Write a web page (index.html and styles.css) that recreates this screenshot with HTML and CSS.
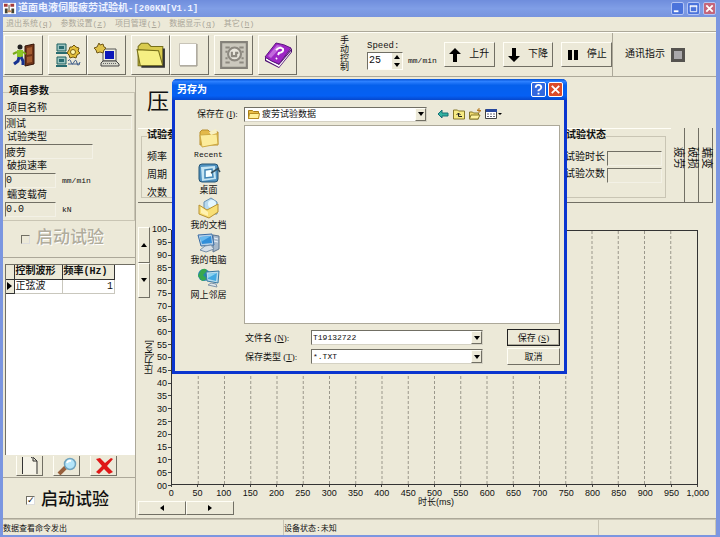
FILE: index.html
```html
<!DOCTYPE html>
<html lang="zh-CN">
<head>
<meta charset="utf-8">
<title>道面电液伺服疲劳试验机</title>
<link rel="stylesheet" href="styles.css">
</head>
<body>
<div class="app">
  <header class="titlebar">
    <svg class="app-icon" viewBox="0 0 14 14" aria-hidden="true"><path fill="#fff" d="M0 1h14v12H0z"/><path fill="#a43c3c" d="M1 2h4v3H1zM8 2h4v3H8z"/><path fill="#443" d="M2 7h3v5H2zM9 7h3v5H9zM6 3h1v8H6z"/><path fill="#c85" d="M5 9h4v2H5z"/></svg>
    <h1 class="app-title">道面电液伺服疲劳试验机<span class="version">-[200KN[V1.1]</span></h1>
    <div class="win-buttons">
      <button class="win-btn" aria-label="最小化"><svg viewBox="0 0 12 12"><path fill="#fff" d="M2 8h5v2H2z"/></svg></button>
      <button class="win-btn" aria-label="最大化"><svg viewBox="0 0 12 12"><path fill="none" stroke="#fff" d="M2.500 3v6.500h7V3M2 3h8M2 4h8"/></svg></button>
      <button class="win-btn close-muted" aria-label="关闭"><svg viewBox="0 0 12 12"><path stroke="#fff" stroke-width="2" d="m2.500 2.500 7 7m0-7-7 7"/></svg></button>
    </div>
  </header>
  <nav class="menubar">
    <a href="#exit">退出系统(<u>q</u>)</a><a href="#set">参数设置(<u>z</u>)</a><a href="#proj">项目管理(<u>t</u>)</a><a href="#data">数据显示(<u>g</u>)</a><a href="#other">其它(<u>h</u>)</a>
  </nav>
  <div class="toolbar">
    <div class="tool-group">
      <button class="tool" aria-label="退出"><svg viewBox="0 0 26 26"><path fill="#713519" stroke="#351408" d="m14 4 9-2v20l-9 2z"/><path fill="#a35b30" d="m16 6 5-1v7l-5 1zm0 9 5-1v6l-5 1z"/><circle cx="9" cy="5" r="2.500" fill="#222"/><path fill="#8bc626" d="M6 8h6v7H6z"/><path fill="none" stroke="#78a918" stroke-width="2" d="m6 10-4 2m10-2 3 2"/><path fill="none" stroke="#173290" stroke-width="3" d="m8 15-1 4-4 3m7-7 2 4v4"/></svg></button>
    </div>
    <div class="tool-group">
      <button class="tool" aria-label="参数"><svg viewBox="0 0 26 26"><g fill="#9cc4c0" stroke="#1c6060"><path d="M2 2h9v7H2zM2 15h9v7H2z"/></g><path fill="#286c70" d="M4 4h5v3H4zM4 17h5v3H4zM1 10h11v2H1zM1 23h11v2H1z"/><path fill="#e3bf3a" stroke="#6f5510" d="m17 5 2-2 2 2 3 1-1 3 2 2-3 2-1 3-3-1-3 1-1-3-2-2 2-3 1-3z"/><circle cx="18" cy="10" r="2.500" fill="#fff8b0" stroke="#806010"/><path fill="none" stroke="#3c5a88" d="M13 19q2-3 3 1t3 0 3 1 3-1M13 22h12"/></svg></button>
      <button class="tool" aria-label="通讯"><svg viewBox="0 0 26 26"><path fill="#eeeede" stroke="#555" d="M9 7h13v12H9z"/><path fill="#0b17b9" d="M11 9h9v8h-9z"/><path fill="#d8d8cc" stroke="#444" d="m7 21 2-2h13l3 3v2H7z"/><path stroke="#666" stroke-dasharray="1 1" d="M9 21.500h13"/><path fill="#dfc24b" stroke="#705818" d="m5 1 1 2 3-1 1 3 2 1-2 2-1 3-3-1-3 1-1-3-2-2 3-1z"/></svg></button>
    </div>
    <div class="tool-group">
      <button class="tool" aria-label="打开"><svg class="wide-icon" viewBox="0 0 28 26"><path fill="#d9cb4e" stroke="#777019" d="M2 23V5l3-3h6l3 3h11v18z"/><path fill="#f6ef83" stroke="#77701a" d="m1 8 20 1 4 14H4z"/><path fill="none" stroke="#333" stroke-width="2" d="M5 24h21V7"/></svg></button>
      <button class="tool" aria-label="新建"><svg viewBox="0 0 26 26"><path fill="#fff" stroke="#c8c4b8" d="M2.500 1.500h17v22h-17z"/><path fill="none" stroke="#99958b" d="M3 24h17V2"/></svg></button>
    </div>
    <div class="tool-group">
      <button class="tool" aria-label="工具" disabled><svg class="wide-icon" viewBox="0 0 28 26"><path fill="#cbc8bd" stroke="#85827a" stroke-width="2" d="M2 1h24v24H2z"/><path fill="none" stroke="#8d8980" stroke-width="2" d="M6 6h4m9 0h4M6 20h4m9 0h4M6 10h2m13 0h2M6 16h2m13 0h2"/><circle cx="14.500" cy="12" r="6" fill="#e9e6dc" stroke="#8d8980" stroke-width="2"/><path fill="none" stroke="#8d8980" stroke-width="2" d="M12 10v4h4v-3h2"/></svg></button>
    </div>
    <div class="tool-group">
      <button class="tool" aria-label="帮助"><svg class="wide-icon" viewBox="0 0 28 28"><path fill="#4c0d72" d="m1 16 14 7 13-16v4L15 27 1 20z"/><path fill="#fff" d="m2 17 13 7L27 10v1L15 26 2 19z"/><path fill="#9d27c4" stroke="#5d1481" d="m1 16 11-14q8 1 15 5L15 23q-7-2-14-7z"/><path fill="#c26add" d="m4 15 9-11 5 1L7 17z"/><path fill="none" stroke="#fff" stroke-width="2" d="M12 9q4-4 7-1 1 3-4 4l-1 2m-1 3-1 1"/></svg></button>
    </div>
    <section class="manual">
      <span class="manual-title">手动控制</span>
      <div class="speed">
        <label for="speed">Speed:</label>
        <div class="speed-row">
          <span class="spin"><input id="speed" type="text" value="25"><span class="spin-btns"><button aria-label="加"><svg viewBox="0 0 6 4"><path d="m3 0 3 4H0z"/></svg></button><button aria-label="减"><svg viewBox="0 0 6 4"><path d="m0 0h6L3 4z"/></svg></button></span></span>
          <span class="unit">mm/min</span>
        </div>
      </div>
      <div class="motion">
        <button class="move"><svg viewBox="0 0 12 14"><path d="m6 0 6 6H8v8H4V6H0z"/></svg>上升</button>
        <button class="move"><svg viewBox="0 0 12 14"><path d="m6 14 6-6H8V0H4v8H0z"/></svg>下降</button>
        <button class="move"><svg viewBox="0 0 12 14"><path d="M1 2h4v10H1zM7 2h4v10H7z"/></svg>停止</button>
      </div>
    </section>
    <div class="comm">通讯指示<span class="lamp"></span></div>
  </div>

  <main class="main">
    <aside class="side">
      <fieldset class="group project">
        <legend>项目参数</legend>
        <label for="p1">项目名称</label>
        <div class="field"><input id="p1" class="sunken" value="测试"></div>
        <label for="p2">试验类型</label>
        <div class="field"><input id="p2" class="sunken medium" value="疲劳"></div>
        <label for="p3">破损速率</label>
        <div class="field"><input id="p3" class="sunken short" value="0"><span class="unit">mm/min</span></div>
        <label for="p4">蠕变载荷</label>
        <div class="field"><input id="p4" class="sunken short" value="0.0"><span class="unit">kN</span></div>
      </fieldset>
      <label class="start muted"><input type="checkbox" disabled>启动试验</label>
      <div class="waves">
        <div class="wave-list">
          <table class="wave-table">
            <thead><tr><th class="mark"></th><th class="wave">控制波形</th><th class="freq">频率(Hz)</th></tr></thead>
            <tbody><tr><td class="mark"><svg viewBox="0 0 5 8"><path d="m0 0 5 4-5 4z"/></svg></td><td>正弦波</td><td class="num">1</td></tr></tbody>
          </table>
        </div>
        <div class="wave-tools">
          <button class="small-tool" aria-label="新建"><svg viewBox="0 0 24 18"><path fill="#f5f3e8" d="M5 0h9v5h4v12H5z"/><path fill="none" stroke="#333" d="M4.500 0v17M15 1v3h4v13M13 1q1-2 3 0l3 3"/></svg></button>
          <button class="small-tool" aria-label="查看"><svg viewBox="0 0 24 18"><path stroke="#98603c" stroke-width="4" d="m11 10-7 7"/><circle cx="15" cy="7" r="5.500" fill="#b4e5fa" stroke="#71a4bf" stroke-width="1.500"/><path fill="none" stroke="#fff" stroke-width="2" d="M12 6q1-3 4-2"/></svg></button>
          <button class="small-tool" aria-label="删除"><svg viewBox="0 0 24 18"><path fill="#df1717" d="m4 2 4-1 5 5 6-5 2 1-6 7 6 6-4 2-5-5-5 5-3-2 6-6z"/></svg></button>
        </div>
      </div>
      <label class="start live"><input type="checkbox" checked>启动试验</label>
    </aside>

    <section class="work">
      <h2 class="reading">压</h2>
      <div class="tabs">
        <div class="page">
          <fieldset class="group params"><legend>试验参数</legend><p>频率</p><p>周期</p><p>次数</p></fieldset>
          <fieldset class="group state"><legend>试验状态</legend>
            <div class="state-row"><label for="s1">试验时长</label><input id="s1" class="sunken"></div>
            <div class="state-row"><label for="s2">试验次数</label><input id="s2" class="sunken"></div>
          </fieldset>
        </div>
        <button class="tab active">疲劳</button><button class="tab">破损</button><button class="tab">蠕变</button>
      </div>
      <div class="chart">
        <div class="vscroll"><button aria-label="向上"><svg viewBox="0 0 6 4"><path d="m3 0 3 4H0z"/></svg></button><button aria-label="向下"><svg viewBox="0 0 6 4"><path d="M0 0h6L3 4z"/></svg></button></div>
        <span class="y-title">压力[kN]</span>
        <div class="y-labels"><span>100</span><span>95</span><span>90</span><span>85</span><span>80</span><span>75</span><span>70</span><span>65</span><span>60</span><span>55</span><span>50</span><span>45</span><span>40</span><span>35</span><span>30</span><span>25</span><span>20</span><span>15</span><span>10</span><span>05</span><span>00</span></div>
        <svg class="plot">
          <g class="grid">
            <line x1="5%" x2="5%" y2="100%"/><line x1="10%" x2="10%" y2="100%"/><line x1="15%" x2="15%" y2="100%"/><line x1="20%" x2="20%" y2="100%"/><line x1="25%" x2="25%" y2="100%"/><line x1="30%" x2="30%" y2="100%"/><line x1="35%" x2="35%" y2="100%"/><line x1="40%" x2="40%" y2="100%"/><line x1="45%" x2="45%" y2="100%"/><line x1="50%" x2="50%" y2="100%"/><line x1="55%" x2="55%" y2="100%"/><line x1="60%" x2="60%" y2="100%"/><line x1="65%" x2="65%" y2="100%"/><line x1="70%" x2="70%" y2="100%"/><line x1="75%" x2="75%" y2="100%"/><line x1="80%" x2="80%" y2="100%"/><line x1="85%" x2="85%" y2="100%"/><line x1="90%" x2="90%" y2="100%"/><line x1="95%" x2="95%" y2="100%"/>
          </g>
        </svg>
        <div class="x-labels"><span>0</span><span>50</span><span>100</span><span>150</span><span>200</span><span>250</span><span>300</span><span>350</span><span>400</span><span>450</span><span>500</span><span>550</span><span>600</span><span>650</span><span>700</span><span>750</span><span>800</span><span>850</span><span>900</span><span>950</span><span>1,000</span></div>
      </div>
      <div class="chart-foot">
        <div class="hscroll"><button aria-label="向左"><svg viewBox="0 0 4 6"><path d="M4 0v6L0 3z"/></svg></button><button aria-label="向右"><svg viewBox="0 0 4 6"><path d="m0 0 4 3-4 3z"/></svg></button></div>
        <span class="x-title">时长(ms)</span>
      </div>
    </section>
  </main>
  <footer class="status"><span>数据查看命令发出</span><span>设备状态:未知</span><span></span></footer>
</div>

<form class="dialog" role="dialog" aria-labelledby="dlg-title">
  <header class="dlg-head">
    <h2 id="dlg-title">另存为</h2>
    <button type="button" class="dlg-btn help" aria-label="帮助"><svg viewBox="0 0 14 14"><path fill="none" stroke="#fff" stroke-width="2" d="M4 5q0-3 3-3t3 3q0 1-3 3v1m0 1.500v2"/></svg></button>
    <button type="button" class="dlg-btn close" aria-label="关闭"><svg viewBox="0 0 14 14"><path stroke="#fff" stroke-width="2" d="m3 3 8 8m0-8-8 8"/></svg></button>
  </header>
  <div class="dlg-body">
    <div class="look-row">
      <label for="look">保存在 (<u>I</u>):</label>
      <div class="combo look">
        <svg class="mini" viewBox="0 0 12 12"><path fill="#e8bd45" stroke="#a77d17" d="M.500 10.500v-8h4l1 1h5v7z"/><path fill="#fff09a" stroke="#b58b20" d="M1.500 5.500h10l-1 5h-10z"/></svg>
        <select id="look"><option>疲劳试验数据</option></select>
        <span class="arrow"><svg viewBox="0 0 6 4"><path d="M0 0h6L3 4z"/></svg></span>
      </div>
      <div class="nav-tools">
        <button type="button" aria-label="后退"><svg viewBox="0 0 12 12"><path fill="#32b3a0" stroke="#176e77" d="m1 6 4-4v3h6v3H5v2z"/></svg></button>
        <button type="button" aria-label="向上"><svg viewBox="0 0 12 12"><path fill="#f7eb83" stroke="#86782a" d="M.500 11V2h4l1 1h6v8z"/><path fill="none" stroke="#222" d="M9 8.500H5.500V5m-2 2 2-2 2 2"/></svg></button>
        <button type="button" aria-label="新建文件夹"><svg viewBox="0 0 12 12"><path fill="#f1db71" stroke="#86782a" d="M.500 11V4h3l1 1h5v6z"/><path fill="#fff39d" stroke="#86782a" d="M2 7h9l-2 4H.500z"/><path stroke="#b97a20" d="M10 0v5M8 2.500h4M8.500 1l3 3"/></svg></button>
        <button type="button" class="view" aria-label="查看"><svg viewBox="0 0 17 12"><path fill="#fff" stroke="#444" d="M.500 1.500h11v9H.500z"/><path fill="#27479c" d="M1 1h11v3H1z"/><path stroke="#667" stroke-dasharray="2 1" d="M2 6h9M2 8.500h9"/><path d="M13 5h4l-2 2z"/></svg></button>
      </div>
    </div>
    <div class="browse">
      <nav class="places">
        <a href="#recent"><svg viewBox="0 0 24 22"><path fill="#e3b949" stroke="#b98f2f" d="M3 18V5l2-2h6l2 2h8v13z"/><path fill="#fcec9b" stroke="#ceaa42" d="m3 8 17-1 1 10-16 3z"/><path fill="#f9f1c3" d="m12 5 7-3 1 4-6 2z"/></svg><span class="latin">Recent</span></a>
        <a href="#desktop"><svg viewBox="0 0 24 22"><rect x="2" y="2" width="19" height="18" rx="3" fill="#4f92c0" stroke="#245475"/><path fill="#c5e5f3" d="m4 5 14-1 1 13-14 2z"/><path fill="#f7ffff" stroke="#4085b5" stroke-width="1.500" d="m8 8 7-1 1 8-8 1z"/><path stroke="#35505e" stroke-width="1.500" d="m14 11 8-5m-1 1 2 3"/></svg><span>桌面</span></a>
        <a href="#documents"><svg viewBox="0 0 24 22"><path fill="#b7d9ef" stroke="#6791b3" d="m7 5 7-4 6 4v12H7z"/><circle cx="15" cy="7" r="4" fill="#e4f7ff"/><path fill="#f8df75" stroke="#b79132" d="m2 8 8 5 11-6v8l-9 6-10-4z"/><path fill="#fff2b1" d="m4 10 7 5v4l-7-3z"/></svg><span>我的文档</span></a>
        <a href="#computer"><svg viewBox="0 0 24 22"><path fill="#a8b9cb" stroke="#5e7690" d="m16 3 6 1v13l-6 3z"/><path stroke="#e8f2fa" d="m17 6 4 1m-4 2 4 1"/><path fill="#b6d0e8" stroke="#396ca5" d="m1 3 14-1 2 11-13 1z"/><path fill="#318ed9" d="m3 5 11-1 1 7-10 1z"/><path fill="#68b9ed" d="m3 5 11-1-10 6z"/><path fill="#d7dfe7" stroke="#7890a8" d="m8 14 6-1 3 4-8 3-6-2z"/></svg><span>我的电脑</span></a>
        <a href="#network"><svg viewBox="0 0 24 22"><circle cx="7" cy="8" r="6" fill="#2386ae"/><path fill="#38a84f" d="M4 3q5-3 6 1L6 8l4 4-5 2-4-5z"/><path fill="#b8dced" stroke="#3877a1" d="m9 5 13-1-1 12-11-2z"/><path fill="#43a9e1" d="m11 7 9-1-1 8-8-2z"/><path fill="#8cd3f0" d="m11 7 9-1-9 5z"/><path fill="#dce5ec" stroke="#8195a8" d="m14 16 5 1 1 3-9-2z"/></svg><span>网上邻居</span></a>
      </nav>
      <div class="file-area">
        <div class="file-list"></div>
        <div class="save-row">
          <label for="fname">文件名 (<u>N</u>):</label>
          <div class="combo"><input id="fname" class="latin" value="T19132722"><button type="button" class="arrow" aria-label="展开"><svg viewBox="0 0 6 4"><path d="M0 0h6L3 4z"/></svg></button></div>
          <button class="action default">保存 (<u>S</u>)</button>
        </div>
        <div class="save-row">
          <label for="ftype">保存类型 (<u>T</u>):</label>
          <div class="combo"><select id="ftype" class="latin"><option>*.TXT</option></select><span class="arrow"><svg viewBox="0 0 6 4"><path d="M0 0h6L3 4z"/></svg></span></div>
          <button type="button" class="action">取消</button>
        </div>
      </div>
    </div>
  </div>
</form>
</body>
</html>
```
FILE: styles.css
```css
:root {
  --face: #ece9d8;
  --shadow: #aca899;
  --dark: #716f64;
  --light: #fffef6;
}
* { box-sizing: border-box; }
body {
  margin: 0;
  position: relative;
  background: var(--face);
  color: #111;
  font: 10px/14px "Liberation Mono", "Noto Sans CJK SC", monospace;
}
button, input, select {
  margin: 0; padding: 0; border: 0; border-radius: 0;
  background: none; color: inherit; font: inherit;
  min-width: 0;
}
select { appearance: none; }
h1, h2, p { margin: 0; font-weight: normal; }
svg { display: block; flex: none; }
a { color: inherit; text-decoration: none; }

.app {
  min-height: 100vh;
  display: flex; flex-direction: column;
  border: solid #7b96e0;
  border-width: 0 4px 2px 3px;
}

/* title and menu */
.titlebar {
  height: 17px; flex: none;
  display: flex; align-items: center; gap: 2px;
  background: linear-gradient(#6f8ddc, #809ee6 50%, #7894de);
  color: #eef2ff;
}
.app-icon { width: 13px; height: 13px; }
.app-title { flex: 1; font-size: 10px; line-height: 16px; font-weight: bold; white-space: nowrap; }
.version { font-size: 9px; }
.win-buttons { display: flex; gap: 3px; }
.win-btn {
  width: 13px; height: 13px;
  border: 1px solid #b3c4f4; border-radius: 2px;
  background: #4b73db;
}
.win-btn svg { width: 11px; height: 11px; }
.close-muted { background: #c5657a; }
.menubar {
  height: 15px; flex: none;
  display: flex; gap: 8px; padding: 0 3px;
  font-size: 8px; line-height: 14px; color: #aaa698;
  border-bottom: 1px solid var(--shadow);
}

/* toolbar */
.toolbar {
  height: 45px; flex: none;
  display: flex; align-items: stretch; gap: 5px;
  padding-left: 1px;
  border-top: 1px solid var(--light);
  border-bottom: 1px solid var(--shadow);
}
.tool-group { display: flex; align-items: center; }
.tool {
  width: 39px; height: 40px;
  display: flex; align-items: center; justify-content: center;
}
.tool, .small-tool, .move, .vscroll button, .hscroll button, .action, .arrow {
  border: 1px solid; border-color: var(--light) var(--dark) var(--dark) var(--light);
}
.tool svg { width: 26px; height: 26px; }
.tool .wide-icon { width: 30px; height: 28px; }
.manual { flex: 1; display: flex; align-items: center; margin-left: 34px; border-right: 1px solid var(--shadow); }
.manual-title {
  width: 17px; padding: 0 4px; font-size: 9px; line-height: 9px;
  word-break: break-all; margin-right: 14px;
}
.speed { font-size: 9px; line-height: 12px; margin-right: 7px; }
.speed label { display: block; }
.speed-row { display: flex; align-items: center; gap: 5px; }
.spin {
  display: flex; width: 36px; height: 18px; background: #fff;
  border: 1px solid; border-color: var(--dark) var(--light) var(--light) var(--dark);
}
.spin input { flex: 1; font-size: 10px; padding-left: 1px; }
.spin-btns { display: grid; width: 10px; background: var(--face); }
.spin-btns button { display: grid; place-items: center; }
.spin-btns svg { width: 6px; height: 4px; }
.unit { font: 8px/12px "Liberation Mono", monospace; }
.motion { flex: 1; display: flex; gap: 8px; }
.move {
  flex: 1; height: 25px; white-space: nowrap;
  display: flex; align-items: center; justify-content: center; gap: 8px;
}
.move svg { width: 12px; height: 14px; }
.comm { width: 98px; display: flex; align-items: center; gap: 6px; padding-left: 7px; }
.lamp { width: 14px; height: 14px; border: 3px solid #55534f; background: #aaa8aa; }

/* left column */
.main { flex: 1; display: flex; min-height: 0; }
.side { width: 133px; flex: none; display: flex; flex-direction: column; border-right: 1px solid var(--shadow); }
.group { margin: 0; min-width: 0; padding: 0; border: 1px solid #c9c5b4; }
legend { font-weight: bold; line-height: 14px; padding: 0; margin-left: 4px; }
.project { margin-top: 8px; padding: 2px 2px 3px; border-left: 0; }
.project label { display: block; height: 14px; line-height: 16px; padding-left: 2px; }
.field { display: flex; align-items: center; gap: 6px; height: 15px; }
.sunken {
  width: 100%; height: 15px;
  border: 1px solid; border-color: var(--dark) #f3f1e6 #f3f1e6 var(--dark);
}
.medium { width: 88px; }
.short { width: 51px; }
.start { display: flex; align-items: center; font-size: 17px; line-height: 24px; gap: 6px; height: 36px; padding-left: 23px; font-weight: 500; }
.start input {
  appearance: none; width: 9px; height: 9px; background: #fff;
  border: 1px solid; border-color: var(--dark) #ddd #ddd var(--dark);
}
.start input:checked::after { content: "✓"; display: block; font: bold 9px/7px "DejaVu Sans", sans-serif; }
.live { height: 40px; padding-top: 5px; }
.muted { color: #b0ac9c; text-shadow: 1px 1px #fff; padding-left: 18px; }
.muted input { background: var(--face); }
.waves {
  flex: 1; display: flex; flex-direction: column;
  border-top: 1px solid var(--shadow); border-bottom: 1px solid var(--shadow);
  padding: 6px 0 0 2px;
}
.wave-list { flex: 1; background: #fff; border: solid var(--dark); border-width: 1px 0 0 1px; }
.wave-table { border-collapse: collapse; table-layout: fixed; width: 109px; line-height: 13px; }
.wave-table th, .wave-table td { padding: 0 1px; height: 14px; border: 1px solid #c9c7bd; text-align: left; white-space: nowrap; }
.wave-table th, .wave-table .mark { background: var(--face); border: solid #333; border-width: 0 1px 1px 0; }
.wave-table .mark { width: 8px; }
.wave-table .wave { width: 48px; }
.wave-table .num { text-align: right; }
.mark svg { width: 5px; height: 8px; }
.wave-tools { display: flex; gap: 10px; padding: 1px 11px; }
.small-tool { width: 27px; height: 20px; display: grid; place-items: center; border-top: 0; }
.small-tool svg { width: 24px; height: 18px; }

/* work area */
.work { flex: 1; min-width: 0; display: flex; flex-direction: column; padding: 0 3px 3px 2px; }
.reading { height: 51px; padding-left: 9px; font-size: 22px; line-height: 53px; }
.tabs { height: 75px; display: flex; }
.page {
  flex: 1; display: flex; justify-content: space-between;
  padding: 0 5px 4px 3px;
  border: solid; border-width: 1px 0 1px 0; border-color: var(--light) transparent var(--dark);
}
.params { flex: 1; padding: 6px 5px 0; }
.params legend { margin-left: 0; }
.params p { line-height: 18px; }
.state { width: 101px; border-left: 0; padding: 8px 3px 0 0; }
.state legend { margin-left: 1px; }
.state-row { display: flex; height: 17px; align-items: flex-start; white-space: nowrap; }
.state-row label { width: 42px; flex: none; }
.tab {
  width: 14px; writing-mode: vertical-rl; text-orientation: sideways;
  font-size: 11px; line-height: 12px; text-align: center;
  border: solid var(--dark); border-width: 0 1px 1px 0;
  padding-bottom: 14px;
}
.chart {
  flex: 1; min-height: 0; margin-top: 20px;
  display: grid;
  grid-template-columns: 12px 21px 1fr 15px;
  grid-template-rows: 7px 1fr 7px 5px;
  font: 9px/12px "Liberation Sans", "Noto Sans CJK SC", sans-serif;
}
.vscroll { grid-area: 1 / 1 / 4 / 2; margin-top: 4px; height: 71px; display: grid; }
.vscroll button, .hscroll button { display: grid; place-items: center; }
.vscroll svg { width: 6px; height: 4px; }
.y-title {
  grid-area: 1 / 1 / 4 / 3; place-self: center start; margin-left: 5px;
  writing-mode: vertical-rl; transform: rotate(180deg); line-height: 12px;
}
.y-labels {
  grid-area: 1 / 2 / 4 / 3; min-height: 0;
  display: grid; grid-auto-rows: 1fr; justify-items: end; align-items: center;
}
.y-labels span { display: flex; align-items: center; gap: 1px; min-height: 0; }
.y-labels span::after { content: ""; width: 3px; height: 1px; background: #444; }
.plot { grid-area: 2 / 3; width: 100%; height: 100%; border: 1px solid #333; }
.grid { stroke: #9a978b; stroke-dasharray: 3 2; }
.x-labels {
  grid-area: 3 / 3 / 5 / 4; margin: 0 -13px;
  display: grid; grid-auto-flow: column; grid-auto-columns: minmax(0, 1fr); justify-items: center;
}
.x-labels span::before { content: ""; display: block; width: 1px; height: 2px; margin: 0 auto; background: #444; }
.chart-foot { height: 18px; display: flex; align-items: flex-start; }
.hscroll { width: 96px; height: 14px; align-self: flex-end; display: grid; grid-template-columns: 1fr 1fr; }
.hscroll svg { width: 4px; height: 6px; }
.x-title { flex: 1; padding-left: 184px; font: 9px/10px "Liberation Sans", "Noto Sans CJK SC", sans-serif; }
.status {
  height: 17px; flex: none; display: grid; grid-template-columns: 281px 1fr 117px;
  font-size: 8px; line-height: 18px; border-top: 1px solid var(--shadow);
}
.status span { border: solid #c9c5b4; border-width: 1px 1px 0 0; overflow: hidden; }

/* save dialog floating above the main window */
.dialog {
  position: absolute; left: 172px; top: 79px; width: 395px;
  background: var(--face);
  border: solid #0a35cf; border-width: 0 3px 3px;
  border-radius: 5px 5px 0 0;
  font: 9px/12px "Liberation Serif", "Noto Sans CJK SC", serif;
}
.latin { font: 8px/12px "Liberation Mono", monospace; }
.dlg-head {
  height: 21px; margin: 0 -3px; padding: 0 4px 0 5px;
  display: flex; align-items: center; gap: 2px;
  border-radius: 5px 5px 0 0;
  background: linear-gradient(#0753d5, #2c80ff 12%, #0560ec 30%, #0560f4 80%, #0647cc);
}
.dlg-head h2 { flex: 1; color: #fff; font-size: 10px; line-height: 16px; font-weight: bold; }
.dlg-btn { width: 15px; height: 15px; border: 1px solid #fff; border-radius: 2px; }
.dlg-btn svg { width: 13px; height: 13px; }
.help { background: #3268df; }
.close { background: #dc4b28; }
.dlg-body { padding: 6px 4px 5px 7px; }
.look-row { display: flex; align-items: center; height: 16px; }
.look-row label { width: 62px; padding-left: 15px; white-space: nowrap; }
.combo {
  display: flex; align-items: center; flex: 1; height: 15px; background: #fff;
  border: 1px solid; border-color: var(--dark) #d5d2c4 #d5d2c4 var(--dark);
}
.combo input, .combo select { flex: 1; height: 13px; padding-left: 1px; line-height: 12px; }
.look { flex: none; width: 183px; }
.mini { width: 12px; height: 12px; margin: 0 1px 0 3px; }
.arrow { width: 11px; height: 13px; display: grid; place-items: center; background: var(--face); flex: none; }
.arrow svg { width: 6px; height: 4px; }
.nav-tools { display: flex; gap: 4px; margin-left: 10px; }
.nav-tools svg { width: 12px; height: 12px; }
.nav-tools .view svg { width: 17px; }
.browse { display: flex; margin-top: 3px; }
.places { width: 62px; padding-top: 2px; display: flex; flex-direction: column; gap: 1px; }
.places a { height: 34px; display: flex; flex-direction: column; align-items: center; padding-right: 9px; white-space: nowrap; }
.places svg { width: 24px; height: 22px; }
.file-area { flex: 1; }
.file-list { height: 199px; margin-bottom: 4px; background: #fff; border: 1px solid var(--shadow); }
.save-row { display: flex; align-items: center; height: 19px; }
.save-row label { width: 67px; padding-left: 1px; white-space: nowrap; }
.action { width: 53px; height: 17px; margin-left: 24px; }
.default { border: 1px solid #222; box-shadow: inset -1px -1px var(--shadow); }
```
